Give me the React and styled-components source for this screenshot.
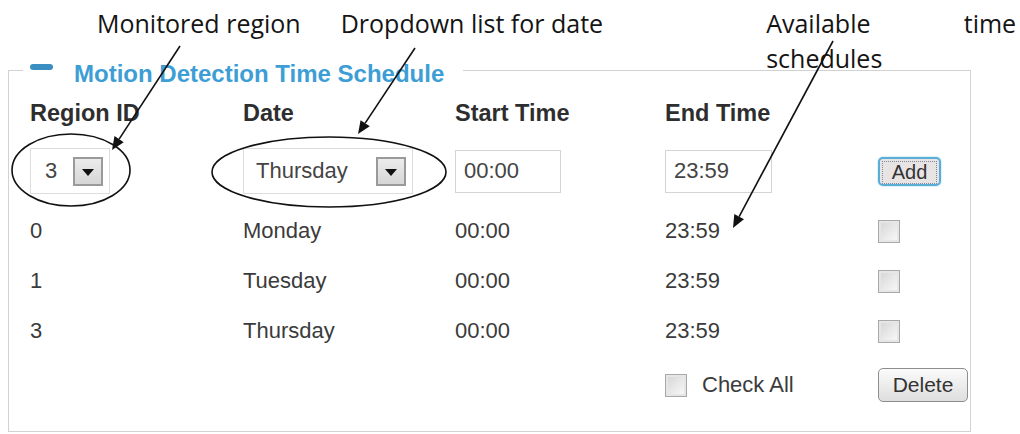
import React from "react";
import styled, { createGlobalStyle } from "styled-components";

const GlobalStyle = createGlobalStyle`
  html, body {
    margin: 0;
    padding: 0;
    background: #ffffff;
  }
  body {
    width: 1020px;
    height: 434px;
    overflow: hidden;
  }
`;

const schedules = [
  { id: 0, region: "0", day: "Monday", start: "00:00", end: "23:59" },
  { id: 1, region: "1", day: "Tuesday", start: "00:00", end: "23:59" },
  { id: 2, region: "3", day: "Thursday", start: "00:00", end: "23:59" }
];

const COLUMNS = "213px 212px 210px 213px 1fr";

const Styled = {
  Page: styled.div`
    position: relative;
    width: 1020px;
    height: 434px;
    font-family: "Liberation Sans", Arial, sans-serif;
  `,

  Notes: styled.div`
    display: flex;
    align-items: flex-start;
    height: 53px;
    padding-top: 6px;
    box-sizing: border-box;
    font-family: "Open Sans", "Noto Sans", sans-serif;
    font-size: 25px;
    line-height: 35px;
    color: #141414;
  `,

  Note: styled.span`
    margin-left: ${({ $left }) => $left}px;
    white-space: nowrap;
  `,

  NoteBlock: styled.div`
    margin-left: ${({ $left }) => $left}px;
    width: ${({ $width }) => $width}px;
    flex-shrink: 0;
    text-align: justify;
    text-align-last: left;
  `,

  Panel: styled.fieldset`
    margin: 0 0 0 8px;
    padding: 0 0 17px 0;
    width: 963px;
    min-inline-size: 0;
    box-sizing: border-box;
    border: 1px solid #d2d2d2;
  `,

  Legend: styled.legend`
    box-sizing: border-box;
    height: 34px;
    margin-left: 14px;
    padding: 7px 19px 0 7px;
    display: flex;
    align-items: center;
    line-height: 27px;
  `,

  Dash: styled.span`
    align-self: flex-start;
    margin-top: 4px;
    margin-right: 21px;
    width: 23px;
    height: 6px;
    border-radius: 3px;
    background: #3a8ec2;
  `,

  Title: styled.span`
    font-size: 24px;
    font-weight: bold;
    color: #3d9ed6;
  `,

  Body: styled.div`
    padding-left: 21px;
  `,

  Row: styled.div`
    display: grid;
    grid-template-columns: ${COLUMNS};
    align-items: center;
    height: ${({ $h }) => $h}px;
    margin-top: ${({ $top }) => $top || 0}px;
    font-size: 22px;
    color: #3b3b3b;
  `,

  Head: styled.span`
    font-size: 23.5px;
    font-weight: bold;
    color: #2e2e2e;
  `,

  Select: styled.div`
    display: flex;
    align-items: center;
    justify-content: space-between;
    box-sizing: border-box;
    width: ${({ $w }) => $w}px;
    height: 46px;
    padding: 0 6px 0 ${({ $pad }) => $pad}px;
    border: 1px solid #dcdcdc;
    background: #fff;
    color: #444;
  `,

  SelectButton: styled.span`
    display: flex;
    align-items: center;
    justify-content: center;
    box-sizing: border-box;
    width: 30px;
    height: 29px;
    border: 2px solid #9a9a9a;
    background: linear-gradient(#ececec, #d6d6d6);
  `,

  Caret: styled.span`
    width: 0;
    height: 0;
    border-left: 6px solid transparent;
    border-right: 6px solid transparent;
    border-top: 7px solid #111;
    margin-top: 2px;
  `,

  Input: styled.div`
    display: flex;
    align-items: center;
    box-sizing: border-box;
    width: ${({ $w }) => $w}px;
    height: 43px;
    padding-left: 8px;
    border: 1px solid #d4d4d4;
    color: #444;
  `,

  AddButton: styled.button`
    justify-self: start;
    width: 63px;
    height: 29px;
    padding: 2px;
    border: 2px solid #5aaed6;
    border-radius: 5px;
    background: #e9e4e4;
    font-family: inherit;
    font-size: 20px;
    color: #333;
    box-shadow: 0 0 2px #8fcbe8;

    span {
      display: flex;
      align-items: center;
      justify-content: center;
      height: 100%;
      border: 1px dotted #7d8ca0;
    }
  `,

  Check: styled.span`
    display: inline-block;
    box-sizing: border-box;
    width: 22px;
    height: 23px;
    border: 1px solid #a8a8a8;
    background: linear-gradient(135deg, #d4d4d4, #fbfbfb);
    box-shadow: inset 0 0 0 2px #e6e6e6;
  `,

  CheckAll: styled.label`
    display: flex;
    align-items: center;
    gap: 15px;
    color: #3b3b3b;
  `,

  DeleteButton: styled.button`
    justify-self: start;
    width: 90px;
    height: 34px;
    border: 1px solid #8e8e8e;
    border-radius: 5px;
    background: linear-gradient(#fbfbfb, #dedede);
    font-family: inherit;
    font-size: 21px;
    color: #333;
  `,

  Overlay: styled.svg`
    position: absolute;
    left: 0;
    top: 0;
    pointer-events: none;
  `
};

function Arrow({ x1, y1, x2, y2 }) {
  const angle = Math.atan2(y2 - y1, x2 - x1);
  const len = 13;
  const wide = 5.5;
  const bx = x2 - len * Math.cos(angle);
  const by = y2 - len * Math.sin(angle);
  const px = -Math.sin(angle) * wide;
  const py = Math.cos(angle) * wide;
  return (
    <g>
      <line x1={x1} y1={y1} x2={bx} y2={by} stroke="#111" strokeWidth="1.6" />
      <polygon
        points={`${x2},${y2} ${bx + px},${by + py} ${bx - px},${by - py}`}
        fill="#111"
      />
    </g>
  );
}

function App() {
  return (
    <>
      <GlobalStyle />
      <Styled.Page>
        <Styled.Notes>
          <Styled.Note $left={97}>Monitored region</Styled.Note>
          <Styled.Note $left={40}>Dropdown list for date</Styled.Note>
          <Styled.NoteBlock $left={163} $width={250}>
            Available time schedules
          </Styled.NoteBlock>
        </Styled.Notes>

        <Styled.Panel>
          <Styled.Legend>
            <Styled.Dash />
            <Styled.Title>Motion Detection Time Schedule</Styled.Title>
          </Styled.Legend>

          <Styled.Body>
            <Styled.Row $h={52}>
              <Styled.Head>Region ID</Styled.Head>
              <Styled.Head>Date</Styled.Head>
              <Styled.Head>Start Time</Styled.Head>
              <Styled.Head>End Time</Styled.Head>
            </Styled.Row>

            <Styled.Row $h={64}>
              <Styled.Select $w={80} $pad={14}>
                3
                <Styled.SelectButton>
                  <Styled.Caret />
                </Styled.SelectButton>
              </Styled.Select>
              <Styled.Select $w={170} $pad={12}>
                Thursday
                <Styled.SelectButton>
                  <Styled.Caret />
                </Styled.SelectButton>
              </Styled.Select>
              <Styled.Input $w={106}>00:00</Styled.Input>
              <Styled.Input $w={107}>23:59</Styled.Input>
              <Styled.AddButton>
                <span>Add</span>
              </Styled.AddButton>
            </Styled.Row>

            {schedules.map((item, index) => (
              <Styled.Row key={item.id} $h={50} $top={index === 0 ? 3 : 0}>
                <span>{item.region}</span>
                <span>{item.day}</span>
                <span>{item.start}</span>
                <span>{item.end}</span>
                <Styled.Check />
              </Styled.Row>
            ))}

            <Styled.Row $h={58}>
              <span />
              <span />
              <span />
              <Styled.CheckAll>
                <Styled.Check />
                Check All
              </Styled.CheckAll>
              <Styled.DeleteButton>Delete</Styled.DeleteButton>
            </Styled.Row>
          </Styled.Body>
        </Styled.Panel>

        <Styled.Overlay width="1020" height="434" viewBox="0 0 1020 434">
          <ellipse cx="71" cy="170" rx="59" ry="36" fill="none" stroke="#111" strokeWidth="1.6" />
          <ellipse cx="329" cy="172" rx="117" ry="35" fill="none" stroke="#111" strokeWidth="1.6" />
          <Arrow x1={180} y1={46} x2={112} y2={150} />
          <Arrow x1={415} y1={48} x2={358} y2={134} />
          <Arrow x1={833} y1={41} x2={733} y2={228} />
        </Styled.Overlay>
      </Styled.Page>
    </>
  );
}

export default App;
